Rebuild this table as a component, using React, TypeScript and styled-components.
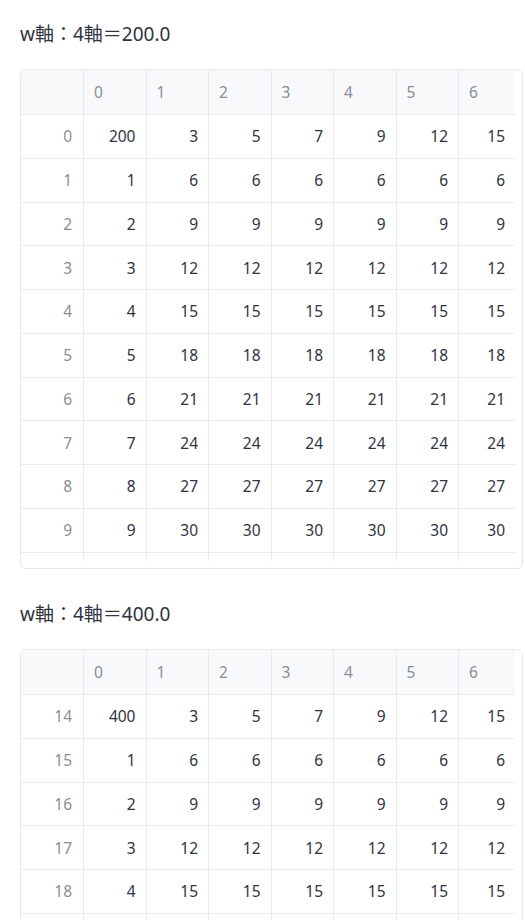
import React from 'react';
import styled, { createGlobalStyle } from 'styled-components';

const GlobalStyle = createGlobalStyle`
  body {
    margin: 0;
    background: #ffffff;
    font-family: 'Noto Sans', 'Noto Sans CJK JP', sans-serif;
    color: #31333f;
  }
`;

const Page = styled.div`
  padding: 18px 20px 40px;
  display: flex;
  flex-direction: column;
`;

const Section = styled.section`
  display: flex;
  flex-direction: column;
  gap: 19px;
  & + & {
    margin-top: 29px;
  }
`;

const Title = styled.div`
  font-size: 19px;
  line-height: 32px;
  height: 32px;
  color: #31333f;
`;

const Frame = styled.div`
  width: 501px;
  border: 1px solid #e6e8ec;
  border-radius: 6px;
  overflow: hidden;
  padding-bottom: 7px;
  background: #ffffff;
`;

const Grid = styled.div<{ $visible: number }>`
  display: grid;
  grid-template-columns: 63px repeat(6, 62.5px) 56px;
  grid-template-rows: 45px;
  grid-auto-rows: 43.75px;
  width: 494px;
  height: ${(p) => p.$visible}px;
  overflow: hidden;
  font-size: 15.5px;
`;

const Cell = styled.div<{ $head?: boolean; $index?: boolean; $last?: boolean }>`
  display: flex;
  align-items: center;
  justify-content: ${(p) => (p.$head ? 'flex-start' : 'flex-end')};
  padding: 0 ${(p) => (p.$index ? 11 : 10)}px 0 10px;
  background: ${(p) => (p.$head ? '#f8f9fb' : '#ffffff')};
  color: ${(p) => (p.$head || p.$index ? '#8b8e96' : '#31333f')};
  border-bottom: 1px solid #e9eaed;
  border-right: ${(p) => (p.$last ? 'none' : '1px solid #e9eaed')};
  box-sizing: border-box;
  white-space: nowrap;
`;

type Row = { index: number; values: number[] };

function buildRows(start: number, first: number, count: number): Row[] {
  const rows: Row[] = [];
  for (let i = 0; i < count; i++) {
    const values =
      i === 0 ? [first, 3, 5, 7, 9, 12, 15] : [i, ...Array(6).fill(3 * (i + 1))];
    rows.push({ index: start + i, values });
  }
  return rows;
}

const cols = [0, 1, 2, 3, 4, 5, 6];

function DataTable({ rows }: { rows: Row[] }) {
  return (
    <Frame>
      <Grid $visible={491}>
        <Cell $head />
        {cols.map((c) => (
          <Cell key={`h${c}`} $head $last={c === 6}>
            {c}
          </Cell>
        ))}
        {rows.map((r) => (
          <React.Fragment key={r.index}>
            <Cell $index>{r.index}</Cell>
            {r.values.map((v, ci) => (
              <Cell key={ci} $last={ci === 6}>
                {v}
              </Cell>
            ))}
          </React.Fragment>
        ))}
        <Cell $index />
        {cols.map((c) => (
          <Cell key={`p${c}`} $last={c === 6} />
        ))}
      </Grid>
    </Frame>
  );
}

export default function App() {
  return (
    <Page>
      <GlobalStyle />
      <Section>
        <Title>w軸：4軸＝200.0</Title>
        <DataTable rows={buildRows(0, 200, 10)} />
      </Section>
      <Section>
        <Title>w軸：4軸＝400.0</Title>
        <DataTable rows={buildRows(14, 400, 5)} />
      </Section>
    </Page>
  );
}
